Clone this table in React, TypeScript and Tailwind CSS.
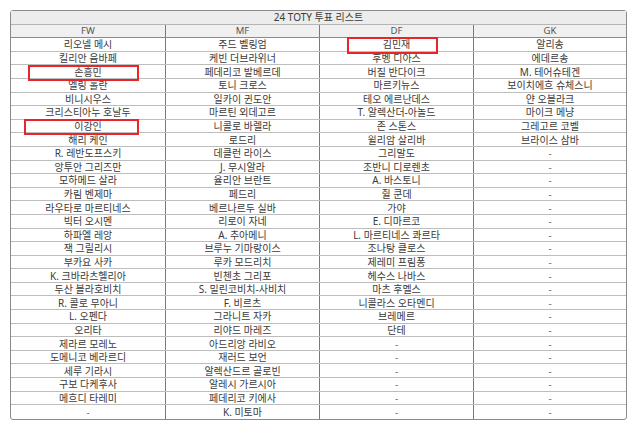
import React from 'react';

const fw = [
  '리오넬 메시', '킬리안 음바페', '손흥민', '엘링 홀란', '비니시우스', '크리스티아누 호날두', '이강인',
  '해리 케인', 'R. 레반도프스키', '앙투안 그리즈만', '모하메드 살라', '카림 벤제마', '라우타로 마르티네스',
  '빅터 오시멘', '하파엘 레앙', '잭 그릴리시', '부카요 사카', 'K. 크바라츠헬리아', '두산 블라호비치',
  'R. 콜로 무아니', 'L. 오펜다', '오리타', '제라르 모레노', '도메니코 베라르디', '세루 기라시', '구보 다케후사',
  '메흐디 타레미', '-',
];

const mf = [
  '주드 벨링엄', '케빈 더브라위너', '페데리코 발베르데', '토니 크로스', '일카이 귄도안', '마르틴 외데고르',
  '니콜로 바렐라', '로드리', '데클런 라이스', 'J. 무시알라', '율리안 브란트', '페드리', '베르나르두 실바',
  '리로이 자네', 'A. 추아메니', '브루누 기마랑이스', '루카 모드리치', '빈첸초 그리포', 'S. 밀린코비치-사비치',
  'F. 비르츠', '그라니트 자카', '리야드 마레즈', '아드리앙 라비오', '재러드 보언', '알렉산드르 골로빈',
  '알레시 가르시아', '페데리코 키에사', 'K. 미토마',
];

const df = [
  '김민재', '후벵 디아스', '버질 반다이크', '마르키뉴스', '테오 에르난데스', 'T. 알렉산더-아놀드', '존 스톤스',
  '윌리암 살리바', '그리말도', '조반니 디로렌초', 'A. 바스토니', '쥘 쿤데', '가야', 'E. 디마르코',
  'L. 마르티네스 콰르타', '조나탕 클로스', '제레미 프림퐁', '헤수스 나바스', '마츠 후멜스', '니콜라스 오타멘디',
  '브레메르', '단테', '-', '-', '-', '-', '-', '-',
];

const gk = [
  '알리송', '에데르송', 'M. 테어슈테겐', '보이치에흐 슈체스니', '얀 오블라크', '마이크 메냥', '그레고르 코벨',
  '브라이스 삼바',
  ...Array(20).fill('-'),
];

const App: React.FC = () => {
  return (
    <div
      className="w-[640px] h-[427px] bg-white pt-[10px] pl-[10px] text-[#3a3a3a]"
      style={{ fontFamily: '"Noto Sans", "Noto Sans CJK KR", sans-serif' }}
    >
      <div className="relative w-[617px] border border-[#8a8a8a] rounded-[3px] overflow-visible">
        {/* 제목 */}
        <div className="h-[13.6px] bg-[#ececec] border-b border-[#b5b5b5] flex items-center justify-center text-[10px] leading-none">
          24 TOTY 투표 리스트
        </div>
        {/* 헤더 */}
        <div className="grid grid-cols-[155px_154px_154px_1fr] h-[13.6px] bg-[#f0f0f0] border-b border-[#8a8a8a] text-[9.5px] leading-none text-[#555]">
          {['FW', 'MF', 'DF', 'GK'].map((h, i) => (
            <div
              key={h}
              className={`flex items-center justify-center ${i < 3 ? 'border-r border-[#7a7a7a]' : ''}`}
            >
              {h}
            </div>
          ))}
        </div>
        {fw.map((_, r) => (
          <div
            key={r}
            className={`grid grid-cols-[155px_154px_154px_1fr] h-[13.6px] text-[10px] leading-none ${
              r < fw.length - 1 ? 'border-b border-[#bdbdbd]' : ''
            }`}
          >
            {[fw[r], mf[r], df[r], gk[r]].map((t, i) => (
              <div
                key={i}
                className={`flex items-center justify-center whitespace-nowrap ${
                  i < 3 ? 'border-r border-[#7a7a7a]' : ''
                } ${t === '-' ? 'text-[#777]' : ''}`}
              >
                {t}
              </div>
            ))}
          </div>
        ))}

        {/* 빨간 표시 */}
        <div className="absolute left-[17px] top-[54px] w-[111px] h-[16px] border-2 border-[#e8262a]" />
        <div className="absolute left-[13px] top-[108px] w-[115px] h-[16px] border-2 border-[#e8262a]" />
        <div className="absolute left-[336px] top-[26px] w-[91px] h-[17px] border-2 border-[#e8262a]" />
      </div>
    </div>
  );
};

export default App;
